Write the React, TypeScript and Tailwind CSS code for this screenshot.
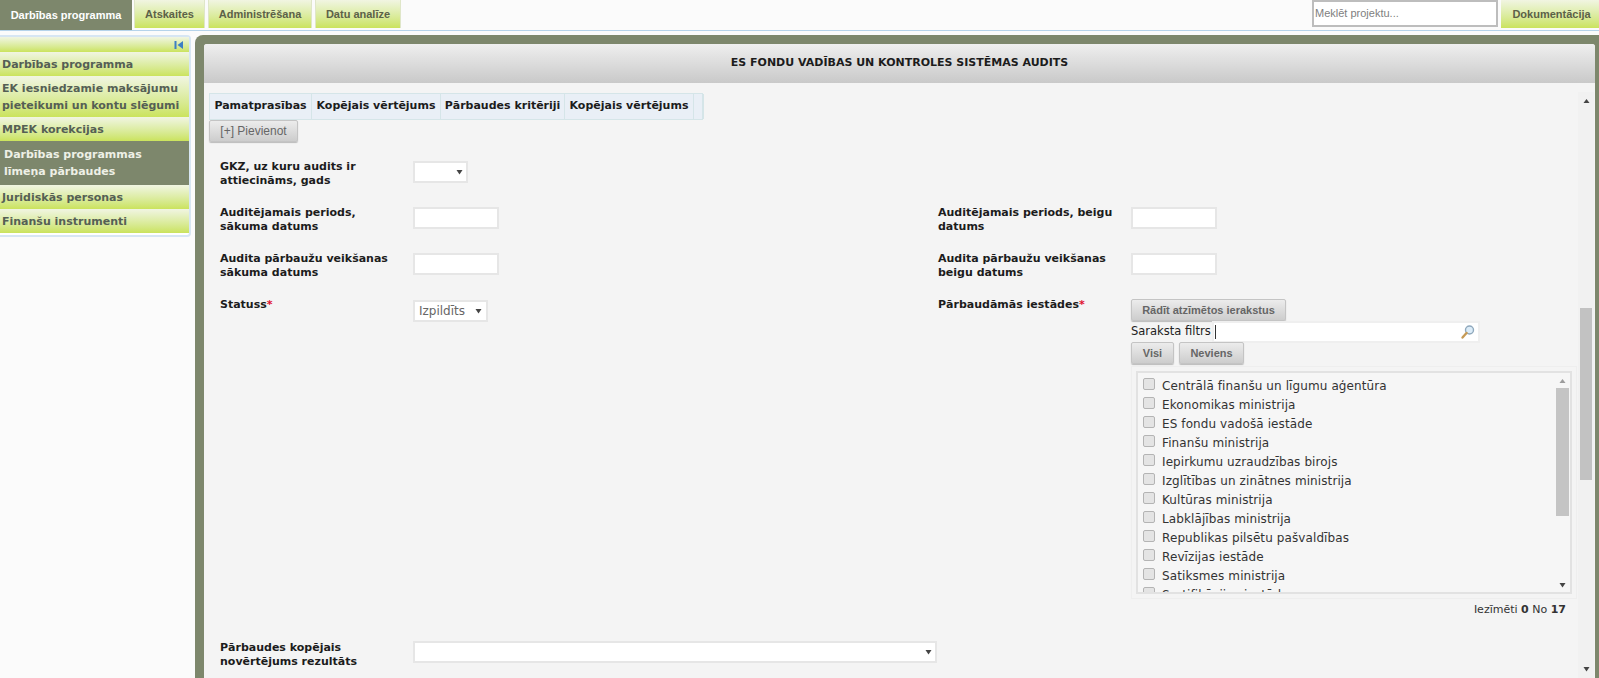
const verdana = "font-['DejaVu_Sans',sans-serif]";

const topTabs = [
  { name: "Atskaites", width: "w-[71px]" },
  { name: "Administrēšana", width: "w-[104px]" },
  { name: "Datu analīze", width: "w-[86px]" },
];

const sideItems = [
  { label: ["Darbības programma"], height: "h-[24px]" },
  { label: ["EK iesniedzamie maksājumu", "pieteikumi un kontu slēgumi"], height: "h-[41px]" },
  { label: ["MPEK korekcijas"], height: "h-[24px]" },
  { label: ["Darbības programmas", "līmeņa pārbaudes"], height: "h-[44px]", active: true },
  { label: ["Juridiskās personas"], height: "h-[24px]" },
  { label: ["Finanšu instrumenti"], height: "h-[24px]" },
];

const headCells = [
  { label: "Pamatprasības", width: "w-[102px]" },
  { label: "Kopējais vērtējums", width: "w-[129px]" },
  { label: "Pārbaudes kritēriji", width: "w-[124px]" },
  { label: "Kopējais vērtējums", width: "w-[129px]" },
  { label: "", width: "w-[10px]" },
];

const institutions = [
  "Centrālā finanšu un līgumu aģentūra",
  "Ekonomikas ministrija",
  "ES fondu vadošā iestāde",
  "Finanšu ministrija",
  "Iepirkumu uzraudzības birojs",
  "Izglītības un zinātnes ministrija",
  "Kultūras ministrija",
  "Labklājības ministrija",
  "Republikas pilsētu pašvaldības",
  "Revīzijas iestāde",
  "Satiksmes ministrija",
  "Sertifikācijas iestāde",
];

function Arrow({ up = false, className = "" }: { up?: boolean; className?: string }) {
  return (
    <svg width="7" height="6" viewBox="0 0 7 6" className={className}>
      <path d={up ? "M3.5 1 L6.5 5 L0.5 5 Z" : "M0.5 1 L6.5 1 L3.5 5.5 Z"} fill="#444" />
    </svg>
  );
}

function GrayButton({ children, className = "" }: { children: React.ReactNode; className?: string }) {
  return (
    <div
      className={`h-[22px] flex items-center justify-center rounded-[2px] border border-[#c4c4c4] bg-gradient-to-b from-[#ececec] to-[#cdcdcd] font-bold text-[#666] shadow-[0_1px_1px_#bbb] font-['Liberation_Sans',sans-serif] ${className}`}
    >
      {children}
    </div>
  );
}

function Field({ className = "", children }: { className?: string; children?: React.ReactNode }) {
  return (
    <div className={`h-[22px] bg-white border-2 border-[#e6e6e6] flex items-center ${className}`}>{children}</div>
  );
}

function Label({ lines, required = false }: { lines: string[]; required?: boolean }) {
  return (
    <div className={`w-[193px] shrink-0 text-[11px] leading-[14px] font-bold text-[#1c1c1c] ${verdana}`}>
      {lines.map((l) => (
        <div key={l} className="whitespace-nowrap">
          {l}
          {required && <span className="text-[#e01030]">*</span>}
        </div>
      ))}
    </div>
  );
}

function Checklist() {
  return (
    <div className="w-[446px] h-[233px] mt-[2px] border border-[#eeeeee] p-[4px]">
      <div className="h-full border-2 border-[#e2e2e2] bg-[#f6f6f6] flex overflow-hidden">
        <div className={`flex-1 pl-[5px] pt-[3px] overflow-hidden text-[12px] tracking-[0.1px] text-[#333] ${verdana}`}>
          {institutions.map((name) => (
            <div key={name} className="h-[19px] flex items-center whitespace-nowrap">
              <span className="w-[12px] h-[12px] rounded-[2px] border border-[#b4b4b4] bg-[#e4e4e4] mr-[7px] -mt-[3px] shrink-0" />
              {name}
            </div>
          ))}
        </div>
        <div className="w-[13px] mr-[1px] flex flex-col items-center">
          <div className="h-[15px] flex items-center justify-center">
            <Arrow up className="opacity-50" />
          </div>
          <div className="w-full h-[128px] bg-[#c4c4c4]" />
          <div className="mt-auto h-[15px] flex items-center justify-center">
            <Arrow />
          </div>
        </div>
      </div>
    </div>
  );
}

export default function App() {
  return (
    <div className="w-[1599px] h-[678px] overflow-hidden bg-[#fbfbfb] font-['Liberation_Sans',sans-serif]">
      {/* top tabs */}
      <div className="h-[31px] flex border-b border-[#b5d3ea]">
        <div className="w-[132px] h-[30px] flex items-center justify-center bg-[#7d876c] text-white text-[11px] font-bold">
          Darbības programma
        </div>
        <div className="flex gap-[3px] ml-[2px]">
          {topTabs.map((t) => (
            <div
              key={t.name}
              className={`${t.width} h-[28px] flex items-center justify-center border-x border-[#dfe6c8] bg-gradient-to-b from-[#f1f5e2] to-[#cbe35c] text-[11px] font-bold text-[#5c6148]`}
            >
              {t.name}
            </div>
          ))}
        </div>
        <div className="ml-auto flex">
          <div className="w-[186px] h-[27px] border-2 border-[#bdbdbd] bg-white flex items-center pl-[1px] text-[11px] text-[#808080]">
            Meklēt projektu...
          </div>
          <div className="w-[98px] h-[28px] ml-[3px] pl-[3px] flex items-center justify-center bg-gradient-to-b from-[#f1f5e2] to-[#cbe35c] text-[11px] font-bold text-[#5c6148]">
            Dokumentācija
          </div>
        </div>
      </div>

      <div className="flex h-[647px] pt-[4px]">
        {/* sidebar */}
        <div className="w-[191px] shrink-0">
          <div className="h-[202px] border-2 border-l-0 border-[#d7e6f3] rounded-r-[4px] bg-white">
            <div className="h-[15px] flex justify-end items-center pr-[5px] bg-gradient-to-b from-[#f1f5e2] to-[#cbe35c]">
              <svg width="10" height="10" viewBox="0 0 10 10">
                <rect x="0.5" y="1" width="2" height="8" fill="#3d7fc4" />
                <path d="M9 1 L9 9 L3.5 5 Z" fill="#3d7fc4" />
              </svg>
            </div>
            {sideItems.map((item) => (
              <div
                key={item.label[0]}
                className={`${item.height} flex flex-col justify-center text-[11px] leading-[17px] font-bold ${verdana} ${
                  item.active
                    ? "bg-[#7d876c] text-[#eef0e6] pl-[4px]"
                    : "bg-gradient-to-b from-[#f1f5e2] to-[#cbe35c] text-[#555f55] pl-[2px]"
                }`}
              >
                {item.label.map((l) => (
                  <div key={l} className="whitespace-nowrap">
                    {l}
                  </div>
                ))}
              </div>
            ))}
          </div>
        </div>

        {/* main panel */}
        <div className="ml-[4px] flex-1 h-[700px] bg-[#7d876c] rounded-tl-[8px] pt-[9px] pl-[9px] pr-[4px]">
          <div className="h-[691px] rounded-t-[3px] bg-[#f4f4f4]">
            <div className={`h-[39px] flex items-center justify-center rounded-t-[3px] bg-gradient-to-b from-[#efefef] to-[#c9c9c9] text-[11px] font-bold text-[#1c1c1c] ${verdana}`}>
              ES FONDU VADĪBAS UN KONTROLES SISTĒMAS AUDITS
            </div>
            <div className="flex h-[595px]">
              <div className="flex-1 pt-[10px] pl-[5px] overflow-hidden">
                {/* criteria table head */}
                <div className="flex w-[494px] h-[27px] border border-[#d5e5e8] bg-[#e9eff6]">
                  {headCells.map((c, i) => (
                    <div
                      key={i}
                      className={`${c.width} shrink-0 flex items-center justify-center border-r border-[#d5e5e8] text-[11px] font-bold text-[#1c1c1c] whitespace-nowrap ${verdana}`}
                    >
                      {c.label}
                    </div>
                  ))}
                </div>
                <GrayButton className="w-[89px] text-[12px] !font-normal">[+] Pievienot</GrayButton>

                {/* form */}
                <div className="pl-[11px] pt-[18px]">
                  <div className="flex h-[46px]">
                    <Label lines={["GKZ, uz kuru audits ir", "attiecināms, gads"]} />
                    <Field className="w-[55px] mt-[1px] justify-end pr-[3px]">
                      <Arrow />
                    </Field>
                  </div>
                  <div className="flex h-[46px]">
                    <div className="flex w-[718px]">
                      <Label lines={["Auditējamais periods,", "sākuma datums"]} />
                      <Field className="w-[86px] mt-[1px]" />
                    </div>
                    <Label lines={["Auditējamais periods, beigu", "datums"]} />
                    <Field className="w-[86px] mt-[1px]" />
                  </div>
                  <div className="flex h-[46px]">
                    <div className="flex w-[718px]">
                      <Label lines={["Audita pārbaužu veikšanas", "sākuma datums"]} />
                      <Field className="w-[86px] mt-[1px]" />
                    </div>
                    <Label lines={["Audita pārbaužu veikšanas", "beigu datums"]} />
                    <Field className="w-[86px] mt-[1px]" />
                  </div>
                  <div className="flex h-[343px]">
                    <div className="flex w-[718px]">
                      <Label lines={["Statuss"]} required />
                      <Field className={`w-[75px] h-[22px] mt-[2px] justify-between pl-[4px] pr-[4px] text-[12px] text-[#666] ${verdana}`}>
                        Izpildīts
                        <Arrow />
                      </Field>
                    </div>
                    <Label lines={["Pārbaudāmās iestādes"]} required />
                    <div className="mt-[1px]">
                      <GrayButton className="w-[155px] text-[11px]">Rādīt atzīmētos ierakstus</GrayButton>
                      <div className="flex items-center h-[21px]">
                        <span className={`w-[81px] whitespace-nowrap text-[11.5px] text-[#222] ${verdana}`}>Saraksta filtrs</span>
                        <Field className="w-[268px] justify-between pl-[1px] pr-[2px] border-[#efefef]">
                          <span className="w-px h-[14px] bg-[#333]" />
                          <svg width="16" height="16" viewBox="0 0 16 16">
                            <circle cx="9.5" cy="6" r="4" fill="#dcecf8" stroke="#8fa8bc" strokeWidth="1.4" />
                            <path d="M6.5 9 L2.5 13.5" stroke="#c69a55" strokeWidth="2.4" strokeLinecap="round" />
                          </svg>
                        </Field>
                      </div>
                      <div className="flex gap-[5px]">
                        <GrayButton className="w-[43px] text-[11px]">Visi</GrayButton>
                        <GrayButton className="w-[65px] text-[11px]">Neviens</GrayButton>
                      </div>
                      <Checklist />
                      <div className={`w-[435px] mt-[3px] text-right text-[11px] leading-[16px] text-[#333] ${verdana}`}>
                        Iezīmēti <b>0</b> No <b>17</b>
                      </div>
                    </div>
                  </div>
                  <div className="flex">
                    <Label lines={["Pārbaudes kopējais", "novērtējums rezultāts"]} />
                    <Field className="w-[524px] justify-end pr-[3px]">
                      <Arrow />
                    </Field>
                  </div>
                </div>
              </div>

              {/* page scrollbar */}
              <div className="w-[16px] mr-[1px] mt-[9px] flex flex-col items-center bg-[#f1f1f1]">
                <div className="h-[18px] flex items-center justify-center">
                  <Arrow up />
                </div>
                <div className="w-[12px] h-[172px] mt-[198px] bg-[#c2c2c2]" />
                <div className="mt-auto h-[18px] flex items-center justify-center">
                  <Arrow />
                </div>
              </div>
            </div>
          </div>
        </div>
      </div>
    </div>
  );
}
